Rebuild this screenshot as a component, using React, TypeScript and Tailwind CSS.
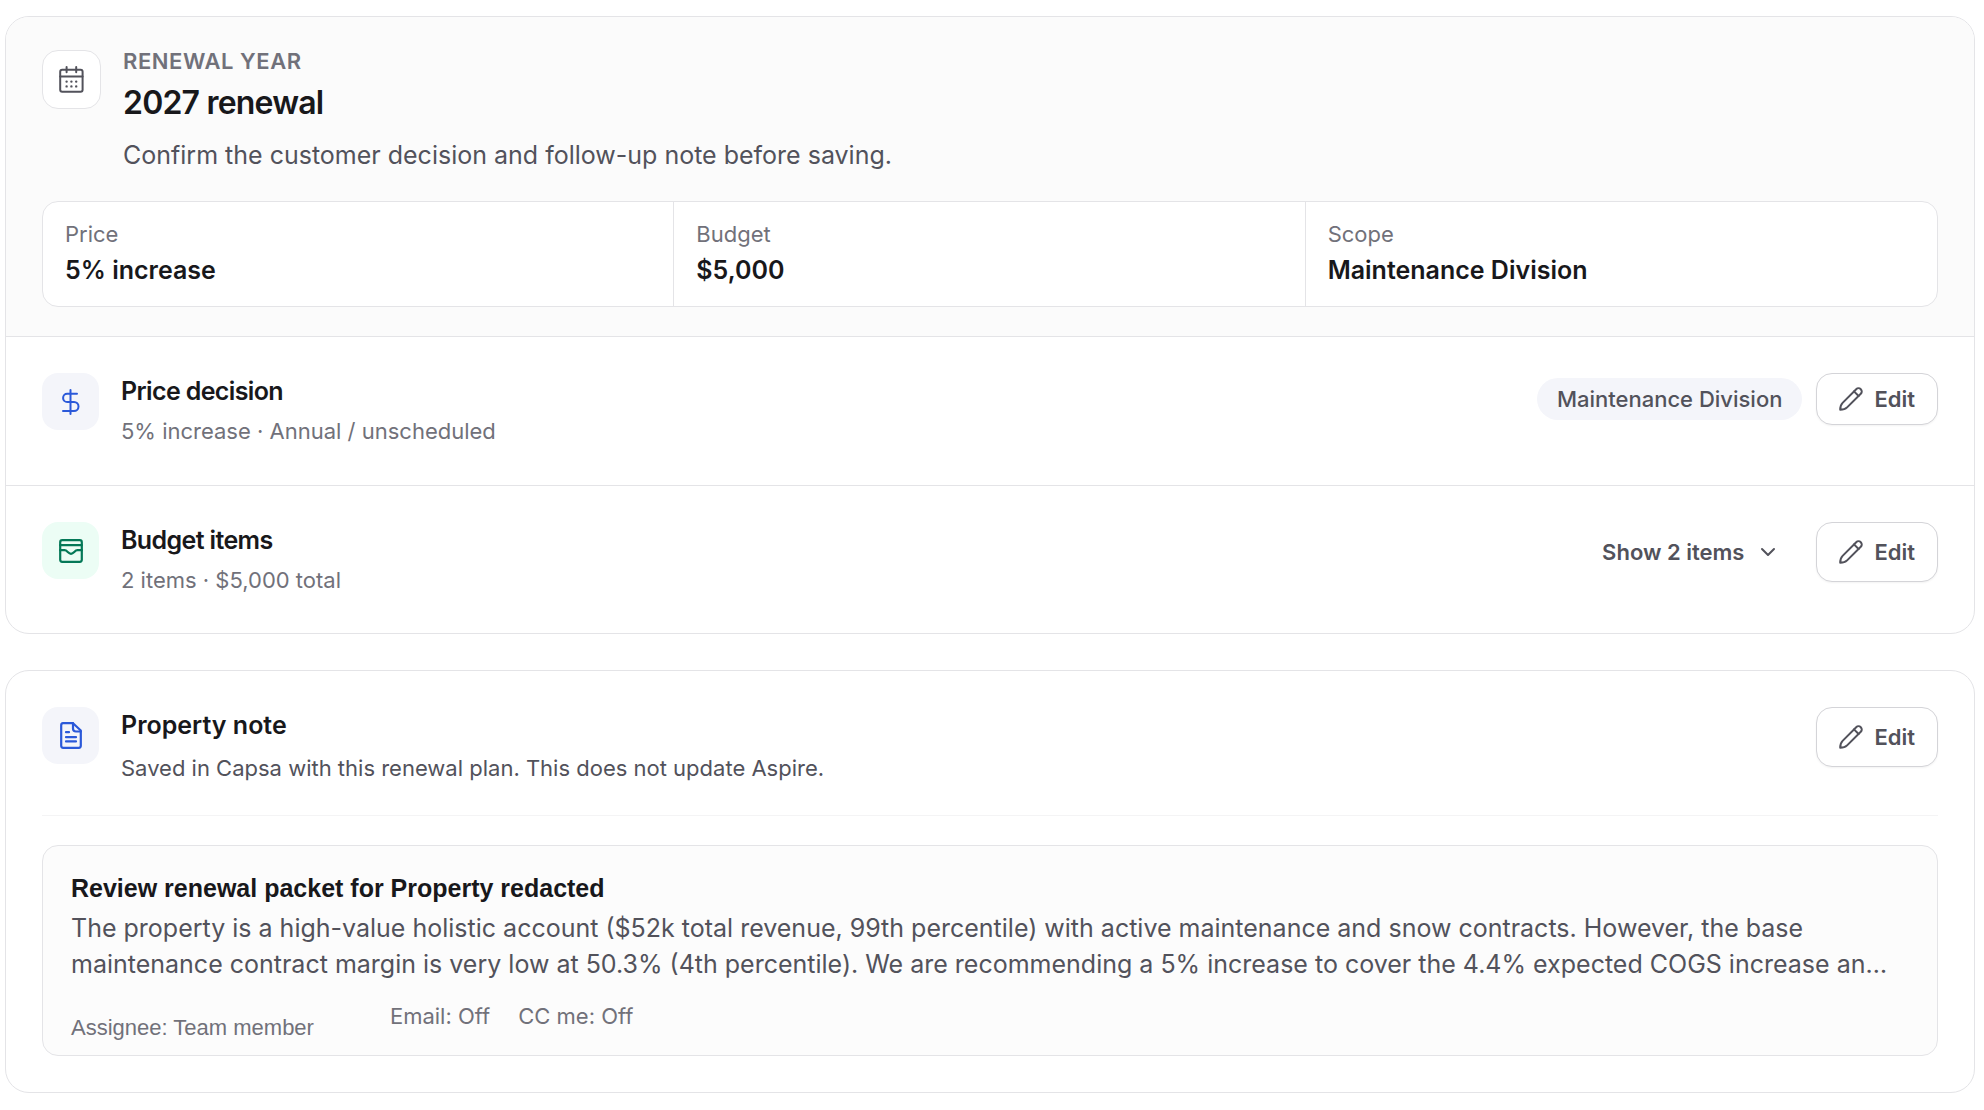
import type { ReactNode } from "react";
import { ChevronDown } from "lucide-react";

const summary = [
  { label: "Price", value: "5% increase" },
  { label: "Budget", value: "$5,000" },
  { label: "Scope", value: "Maintenance Division" },
];

function CalendarIcon() {
  return (
    <svg
      className="h-[27px] w-[25px]"
      viewBox="0 0 25 27"
      fill="none"
      stroke="currentColor"
      strokeWidth="2"
      strokeLinecap="round"
      strokeLinejoin="round"
      aria-hidden="true"
    >
      <rect x="1.2" y="3.8" width="22.4" height="22" rx="2" />
      <path d="M1.2 10.500h22.400M7.600 1v5.200M17.200 1v5.200" />
      <path
        strokeWidth="2.400"
        d="M7.600 15.600h.01M12.400 15.600h.01M17.200 15.600h.01M7.600 20.400h.01M12.400 20.400h.01M17.200 20.400h.01"
      />
    </svg>
  );
}

function DollarIcon() {
  return (
    <svg
      className="h-[26px] w-[19px]"
      viewBox="0 0 19 26"
      fill="none"
      stroke="currentColor"
      strokeWidth="2"
      strokeLinecap="round"
      strokeLinejoin="round"
      aria-hidden="true"
    >
      <path d="M9.500 1v24" />
      <path d="M16 4.800H6.200a4.100 4.100 0 0 0 0 8.200h6.800a4.500 4.500 0 0 1 0 9H2" />
    </svg>
  );
}

function PencilIcon() {
  return (
    <svg
      className="size-6 shrink-0"
      viewBox="0 0 24 24"
      fill="none"
      stroke="currentColor"
      strokeWidth="2"
      strokeLinecap="round"
      strokeLinejoin="round"
      aria-hidden="true"
    >
      <path d="M1.2 22.8 C1.2 19.6 1.9 17.6 3.6 15.9 L17.2 2.2 A3.2 3.2 0 0 1 21.8 6.8 L8.1 20.4 C6.4 22.1 4.4 22.8 1.2 22.8 Z" />
      <path d="m15 4.4 4.6 4.6" />
    </svg>
  );
}

function BudgetIcon() {
  return (
    <svg
      className="size-6"
      viewBox="0 0 24 24"
      fill="none"
      stroke="currentColor"
      strokeWidth="2.200"
      strokeLinecap="round"
      strokeLinejoin="round"
      aria-hidden="true"
    >
      <rect x="1.2" y="1.2" width="21.600" height="21.600" rx="2" />
      <path d="M1.2 6.200h21.600" />
      <path d="M1.2 11.200h4.300c3 0 3.500 3.600 6.500 3.600s3.500-3.600 6.500-3.600h4.300" />
    </svg>
  );
}

function NoteIcon() {
  return (
    <svg
      className="h-[27px] w-[22px]"
      viewBox="0 0 22 27"
      fill="none"
      stroke="currentColor"
      strokeWidth="2.200"
      strokeLinecap="round"
      strokeLinejoin="round"
      aria-hidden="true"
    >
      <path d="M13 1.200H3a2 2 0 0 0-1.800 2v20.600a2 2 0 0 0 2 2h15.600a2 2 0 0 0 2-2V8.500Z" />
      <path d="M13 1.200v5.300a3 3 0 0 0 3 3h4.800" />
      <path d="M6 10.200h3M6 15.200h10M6 19.400h10" />
    </svg>
  );
}

function EditButton({ label, compact }: { label: string; compact?: boolean }) {
  return (
    <button
      type="button"
      aria-label={label}
      className={`flex items-center gap-[11px] rounded-2xl border border-[#d4d4d8] bg-white px-[22px] text-[22px] font-semibold text-[#52525b] shadow-xs ${
        compact ? "h-[52px]" : "h-[60px]"
      }`}
    >
      <PencilIcon />
      Edit
    </button>
  );
}

// Tinted icon, title and subtitle on the left; controls on the right.
function SectionRow({
  icon,
  tint,
  title,
  subtitle,
  children,
}: {
  icon: ReactNode;
  tint: string;
  title: ReactNode;
  subtitle: ReactNode;
  children: ReactNode;
}) {
  return (
    <div className="flex items-start gap-[22px]">
      <div className={`flex size-[57px] shrink-0 items-center justify-center rounded-2xl ${tint}`}>
        {icon}
      </div>
      <div className="min-w-0 flex-1">
        <h3 className="text-[25px] leading-9 font-semibold text-[#18181b]">{title}</h3>
        {subtitle}
      </div>
      <div className="flex shrink-0 items-center gap-3.5">{children}</div>
    </div>
  );
}

export default function App() {
  return (
    <main className="flex min-h-screen flex-col gap-9 bg-white py-4 pr-[9px] pl-[5px] font-['Inter',sans-serif]">
      <section className="overflow-hidden rounded-3xl border border-[#e4e4e7]">
        <header className="border-b border-[#e4e4e7] bg-[#fbfbfb] px-9 pt-[30px] pb-[29px]">
          <div className="flex items-start gap-[22px]">
            <div className="mt-[3px] flex size-[59px] shrink-0 items-center justify-center rounded-2xl border border-[#e4e4e7] bg-white text-[#52525b]">
              <CalendarIcon />
            </div>
            <div>
              <p className="text-[22px] leading-7 font-semibold tracking-wide text-[#71717a] uppercase">
                Renewal year
              </p>
              <h2 className="mt-2 text-[32px] leading-10 font-semibold tracking-tight text-[#18181b]">
                2027 renewal
              </h2>
              <p className="mt-3.5 text-[25px] leading-9 text-[#52525b]">
                Confirm the customer decision and follow-up note before saving.
              </p>
            </div>
          </div>

          <dl className="mt-7 grid grid-cols-3 divide-x divide-[#e4e4e7] rounded-2xl border border-[#e4e4e7] bg-white">
            {summary.map((item) => (
              <div key={item.label} className="px-[22px] py-[18px]">
                <dt className="text-[22px] leading-7 text-[#71717a]">{item.label}</dt>
                <dd className="mt-1 text-[25px] leading-9 font-semibold text-[#18181b]">{item.value}</dd>
              </div>
            ))}
          </dl>
        </header>

        <div className="border-b border-[#e4e4e7] p-9">
          <SectionRow
            icon={<DollarIcon />}
            tint="bg-[#f4f5fa] text-[#2b59d9]"
            title={<span className="tracking-tight">Price decision</span>}
            subtitle={
              <p className="mt-1 text-[22px] leading-9 text-[#71717a]">
                5% increase · Annual / unscheduled
              </p>
            }
          >
            <span className="rounded-full bg-[#f4f5fa] px-5 py-[7px] text-[22px] leading-7 font-medium text-[#52525b]">
              Maintenance Division
            </span>
            <EditButton label="Edit price decision" compact />
          </SectionRow>
        </div>

        <div className="px-9 pt-9 pb-[35px]">
          <SectionRow
            icon={<BudgetIcon />}
            tint="bg-[#ecfdf5] text-[#047857]"
            title={<span className="tracking-tight">Budget items</span>}
            subtitle={
              <p className="mt-1 text-[22px] leading-9 text-[#71717a]">2 items · $5,000 total</p>
            }
          >
            <button
              type="button"
              aria-expanded="false"
              className="flex h-[60px] items-center gap-3 px-[22px] text-[22px] font-semibold text-[#52525b]"
            >
              Show 2 items
              <ChevronDown className="size-6" />
            </button>
            <EditButton label="Edit budget items" />
          </SectionRow>
        </div>
      </section>

      <section className="rounded-3xl border border-[#e4e4e7] p-9">
        <SectionRow
          icon={<NoteIcon />}
          tint="bg-[#f4f5fa] text-[#2b59d9]"
          title="Property note"
          subtitle={
            <p className="mt-[7px] text-[22px] leading-9 text-[#52525b]">
              Saved in Capsa with this renewal plan. This does not update Aspire.
            </p>
          }
        >
          <EditButton label="Edit property note" />
        </SectionRow>

        <hr className="my-[29px] border-[#f4f4f5]" />

        <article className="rounded-2xl border border-[#e4e4e7] bg-[#fcfcfc] px-7 pt-6 pb-[13px]">
          <h4 className="font-['Liberation_Sans',sans-serif] text-[25px] leading-9 font-bold text-[#18181b]">
            Review renewal packet for Property redacted
          </h4>
          <p className="mt-1 text-[25px] leading-9 text-[#52525b]">
            The property is a high-value holistic account ($52k total revenue, 99th percentile) with active
            maintenance and snow contracts. However, the base maintenance contract margin is very low at
            50.3% (4th percentile). We are recommending a 5% increase to cover the 4.4% expected COGS
            increase an…
          </p>
          <div className="mt-5 flex items-start text-[22px] leading-7 text-[#71717a]">
            <span className="mt-3 mr-[76px] font-['Liberation_Sans',sans-serif]">
              Assignee: Team member
            </span>
            <span className="mr-7">Email: Off</span>
            <span>CC me: Off</span>
          </div>
        </article>
      </section>
    </main>
  );
}
